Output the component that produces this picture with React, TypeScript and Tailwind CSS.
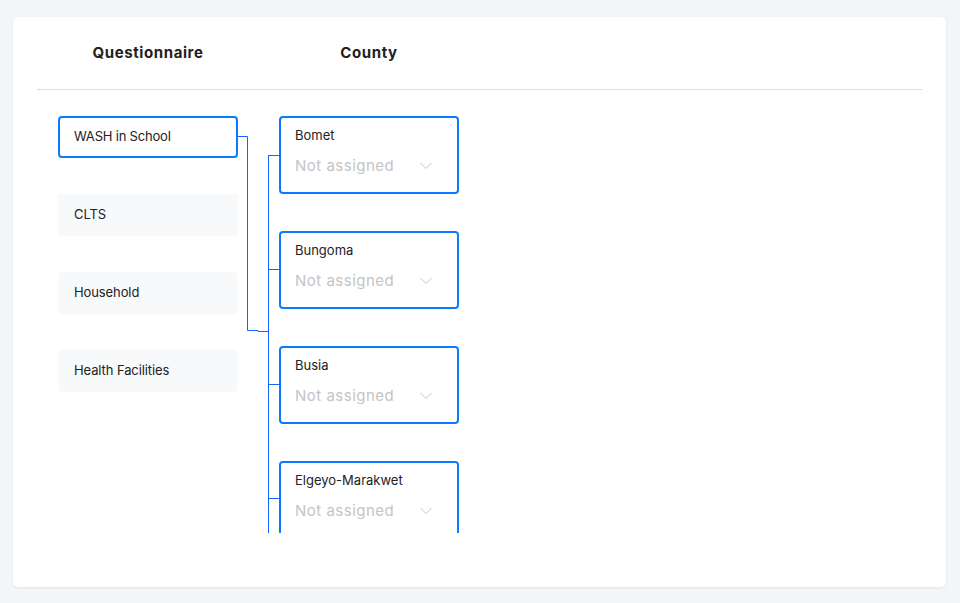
import React from "react";

const questionnaires = ["WASH in School", "CLTS", "Household", "Health Facilities"];
const counties = ["Bomet", "Bungoma", "Busia", "Elgeyo-Marakwet"];

function Chevron() {
  return (
    <svg width="12" height="8" viewBox="0 0 12 8" fill="none" className="shrink-0">
      <path d="M0.5 1 L6 6.5 L11.5 1" stroke="#c4c4c4" strokeWidth="1" />
    </svg>
  );
}

export default function App() {
  const font = { fontFamily: "Inter, 'Noto Sans', sans-serif" };
  return (
    <div className="w-[960px] h-[603px] bg-[#f3f5f9] pt-[17px] pl-[13px]" style={font}>
      <div className="w-[933px] h-[570px] bg-white rounded-[5px] shadow-[0_1px_3px_rgba(0,0,0,0.08)] px-6">
        <div className="h-[73px] flex items-center border-b border-[#dcdde2] pl-[21px] gap-[41px]">
          <div className="w-[180px] text-center text-[15px] font-bold tracking-[0.6px] text-[#222]">Questionnaire</div>
          <div className="w-[180px] text-center text-[15px] font-bold tracking-[0.6px] text-[#222]">County</div>
        </div>
        <div className="relative h-[443px] overflow-hidden">
          <div className="flex pl-[21px] pt-[26px] gap-[41px]">
            <div className="w-[180px] flex flex-col gap-[36px]">
              {questionnaires.map((q, i) => (
                <div
                  key={q}
                  className={
                    i === 0
                      ? "h-[42px] flex items-center px-[14px] rounded-[4px] border-2 border-[#0a7bff] bg-white text-[13px] tracking-[-0.2px] text-[#222]"
                      : "h-[42px] flex items-center px-4 rounded-[4px] bg-[#f8f9fa] text-[13px] tracking-[-0.1px] text-[#222]"
                  }
                >
                  {q}
                </div>
              ))}
            </div>
            <div className="w-[180px] flex flex-col gap-[37px]">
              {counties.map((c) => (
                <div
                  key={c}
                  className="h-[78px] shrink-0 rounded-[4px] border-2 border-[#0a7bff] bg-white px-[14px] pt-[8px]"
                >
                  <div className="text-[13px] text-[#222] leading-[18px]">{c}</div>
                  <div className="mt-[12px] flex items-center justify-between pr-[11px]">
                    <span className="text-[15px] tracking-[0.5px] text-[#c4c4c4] leading-[20px]">Not assigned</span>
                    <Chevron />
                  </div>
                </div>
              ))}
            </div>
          </div>
          <svg className="absolute left-0 top-0" width="260" height="443" fill="none">
            <path
              d="M201 46.5 H210.5 V240.5 H221 V241.5 H231"
              stroke="#1463ff"
              strokeWidth="1"
            />
            <path d="M231.5 65 V443" stroke="#1463ff" strokeWidth="1" />
            {[65.5, 179.5, 294.5, 408.5].map((y) => (
              <path key={y} d={`M231 ${y} H243`} stroke="#1463ff" strokeWidth="1" />
            ))}
          </svg>
        </div>
      </div>
    </div>
  );
}
